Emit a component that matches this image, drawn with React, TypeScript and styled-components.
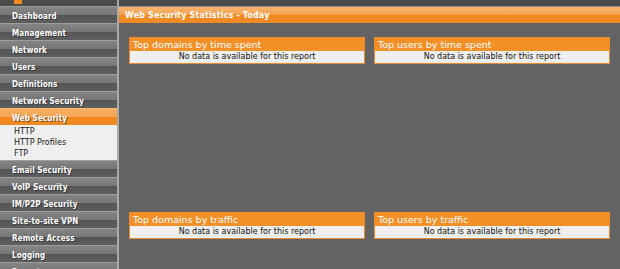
import React from 'react';
import styled, { createGlobalStyle } from 'styled-components';

const GlobalStyle = createGlobalStyle`
  html, body {
    margin: 0;
    padding: 0;
    background: #636363;
    overflow: hidden;
  }
  body {
    font-family: "DejaVu Sans", Verdana, sans-serif;
  }
`;

const Page = styled.div`
  display: flex;
  width: 620px;
  height: 269px;
  overflow: hidden;
`;

const Sidebar = styled.div`
  width: 117px;
  flex-shrink: 0;
  border-right: 2px solid #a9a9a9;
  background: #4f4f4f;
  display: flex;
  flex-direction: column;
`;

const TopStrip = styled.div`
  height: 6px;
  background: #4b4b4b;
  position: relative;
  flex-shrink: 0;
`;

const LogoBit = styled.div`
  position: absolute;
  left: 14px;
  top: 0;
  width: 8px;
  height: 4px;
  background: #f28a1e;
`;

const MenuItem = styled.div<{ $active?: boolean }>`
  box-sizing: border-box;
  height: 17px;
  padding: 2px 0 0 12px;
  flex-shrink: 0;
  border-top: 1px solid ${p => (p.$active ? '#f6b77a' : '#9c9c9c')};
  display: flex;
  align-items: center;
  font-family: "DejaVu Sans Condensed", "DejaVu Sans", sans-serif;
  font-size: 8px;
  font-weight: bold;
  color: #fff;
  text-shadow: 1px 1px 0 rgba(40, 40, 40, 0.6);
  letter-spacing: 0.1px;
  white-space: nowrap;
  background: ${p =>
    p.$active
      ? 'linear-gradient(#f9ae63 0%, #f8a555 50%, #f2871d 52%, #ef8a25 100%)'
      : 'linear-gradient(#858585 0%, #767676 50%, #555555 52%, #5e5e5e 100%)'};
`;

const SubMenu = styled.div`
  background: #efefef;
  padding: 1px 0 1px 14px;
  display: flex;
  flex-direction: column;
  flex-shrink: 0;
`;

const SubItem = styled.div`
  font-size: 8px;
  line-height: 11px;
  height: 11px;
  color: #222;
  white-space: nowrap;
`;

const Main = styled.div`
  flex: 1;
  display: flex;
  flex-direction: column;
  background: #636363;
`;

const MainTop = styled.div`
  height: 6px;
  background: #4b4b4b;
  border-bottom: 1px solid #8c8c8c;
  flex-shrink: 0;
`;

const TitleBar = styled.div`
  height: 16px;
  flex-shrink: 0;
  display: flex;
  align-items: center;
  padding-left: 6px;
  font-size: 8px;
  font-weight: bold;
  letter-spacing: 0.15px;
  color: #fff;
  background: linear-gradient(#f9b36d 0%, #f6a455 45%, #f28a22 50%, #f08a26 100%);
`;

const Grid = styled.div`
  display: grid;
  grid-template-columns: 236px 236px;
  grid-template-rows: 175px 175px;
  column-gap: 9px;
  padding: 14px 0 0 10px;
  align-items: start;
`;

const Panel = styled.div`
  border: 1px solid #f0892a;
  display: flex;
  flex-direction: column;
`;

const PanelHead = styled.div`
  height: 13px;
  background: #f39028;
  color: #fff;
  font-size: 9.5px;
  line-height: 13px;
  padding-left: 3px;
  white-space: nowrap;
`;

const PanelBody = styled.div`
  height: 12px;
  background: #efefef;
  color: #111;
  font-size: 8px;
  line-height: 12px;
  text-align: center;
  white-space: nowrap;
`;

const menuTop = ['Dashboard', 'Management', 'Network', 'Users', 'Definitions', 'Network Security'];
const menuBottom = [
  'Email Security',
  'VoIP Security',
  'IM/P2P Security',
  'Site-to-site VPN',
  'Remote Access',
  'Logging',
  'Reports',
];

const reports = [
  'Top domains by time spent',
  'Top users by time spent',
  'Top domains by traffic',
  'Top users by traffic',
];

const App: React.FC = () => {
  return (
    <Page>
      <GlobalStyle />
      <Sidebar>
        <TopStrip>
          <LogoBit />
        </TopStrip>
        {menuTop.map(m => (
          <MenuItem key={m}>{m}</MenuItem>
        ))}
        <MenuItem $active>Web Security</MenuItem>
        <SubMenu>
          <SubItem>HTTP</SubItem>
          <SubItem>HTTP Profiles</SubItem>
          <SubItem>FTP</SubItem>
        </SubMenu>
        {menuBottom.map(m => (
          <MenuItem key={m}>{m}</MenuItem>
        ))}
      </Sidebar>
      <Main>
        <MainTop />
        <TitleBar>Web Security Statistics - Today</TitleBar>
        <Grid>
          {reports.map(r => (
            <Panel key={r}>
              <PanelHead>{r}</PanelHead>
              <PanelBody>No data is available for this report</PanelBody>
            </Panel>
          ))}
        </Grid>
      </Main>
    </Page>
  );
};

export default App;
